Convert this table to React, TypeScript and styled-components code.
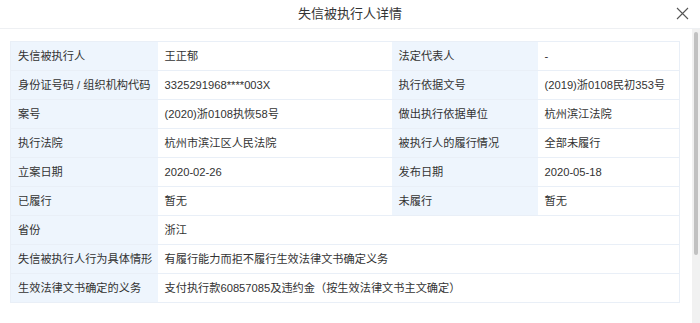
import React from 'react';
import styled, { createGlobalStyle } from 'styled-components';

const GlobalStyle = createGlobalStyle`
  html, body {
    margin: 0;
    padding: 0;
    background: #fff;
  }
  body {
    font-family: "Liberation Sans", Arial, "Noto Sans CJK SC", sans-serif;
    color: #333;
  }
`;

const Dialog = styled.div`
  width: 700px;
  height: 323px;
  display: flex;
  flex-direction: column;
  background: #fff;
  overflow: hidden;
`;

const Header = styled.div`
  position: relative;
  height: 28px;
  flex-shrink: 0;
  display: flex;
  align-items: center;
  justify-content: center;
  border-bottom: 1px solid #eef0f3;
`;

const Title = styled.h3`
  margin: 0;
  font-size: 13px;
  font-weight: normal;
  color: #333;
  line-height: 28px;
`;

const CloseButton = styled.button`
  position: absolute;
  right: 11px;
  top: 7px;
  width: 13px;
  height: 13px;
  padding: 0;
  border: 0;
  background: none;
  color: #555;
  cursor: pointer;
  display: flex;
`;

const Main = styled.div`
  flex: 1;
  display: flex;
  min-height: 0;
`;

const Body = styled.div`
  flex: 1;
  overflow: hidden;
  padding: 12px 13px 0 10px;
`;

const ScrollTrack = styled.div`
  width: 8px;
  flex-shrink: 0;
  background: #f1f1f1;
  padding: 3px 2px 0;
  box-sizing: border-box;
`;

const ScrollThumb = styled.div`
  height: 223px;
  background: #c1c1c1;
  border-radius: 2px;
`;

const Table = styled.table`
  width: 669px;
  border-collapse: collapse;
  table-layout: fixed;
  font-size: 11.2px;
  border: 1px solid #e9eff7;
`;

const Cell = styled.td<{ $label?: boolean }>`
  height: 28px;
  padding: 0 6px 0 7px;
  border-bottom: 1px solid #e9eff7;
  background: ${(p) => (p.$label ? '#eef5fd' : '#fff')};
  color: #333;
  white-space: nowrap;
  overflow: hidden;
  vertical-align: middle;
  line-height: 28px;
`;

type Pair = [string, string];

const pairs: [Pair, Pair?][] = [
  [['失信被执行人', '王正郁'], ['法定代表人', '-']],
  [['身份证号码 / 组织机构代码', '3325291968****003X'], ['执行依据文号', '(2019)浙0108民初353号']],
  [['案号', '(2020)浙0108执恢58号'], ['做出执行依据单位', '杭州滨江法院']],
  [['执行法院', '杭州市滨江区人民法院'], ['被执行人的履行情况', '全部未履行']],
  [['立案日期', '2020-02-26'], ['发布日期', '2020-05-18']],
  [['已履行', '暂无'], ['未履行', '暂无']],
  [['省份', '浙江']],
  [['失信被执行人行为具体情形', '有履行能力而拒不履行生效法律文书确定义务']],
  [['生效法律文书确定的义务', '支付执行款60857085及违约金（按生效法律文书主文确定）']],
];

export default function App() {
  return (
    <>
      <GlobalStyle />
      <Dialog>
        <Header>
          <Title>失信被执行人详情</Title>
          <CloseButton aria-label="关闭">
            <svg width="13" height="13" viewBox="0 0 13 13">
              <path d="M1 1 L12 12 M12 1 L1 12" stroke="currentColor" strokeWidth="1.1" fill="none" />
            </svg>
          </CloseButton>
        </Header>
        <Main>
          <Body>
            <Table>
              <colgroup>
                <col style={{ width: 147 }} />
                <col style={{ width: 234 }} />
                <col style={{ width: 146 }} />
                <col style={{ width: 142 }} />
              </colgroup>
              <tbody>
                {pairs.map(([a, b]) => (
                  <tr key={a[0]}>
                    <Cell $label>{a[0]}</Cell>
                    {b ? (
                      <>
                        <Cell>{a[1]}</Cell>
                        <Cell $label>{b[0]}</Cell>
                        <Cell>{b[1]}</Cell>
                      </>
                    ) : (
                      <Cell colSpan={3}>{a[1]}</Cell>
                    )}
                  </tr>
                ))}
              </tbody>
            </Table>
          </Body>
          <ScrollTrack>
            <ScrollThumb />
          </ScrollTrack>
        </Main>
      </Dialog>
    </>
  );
}
